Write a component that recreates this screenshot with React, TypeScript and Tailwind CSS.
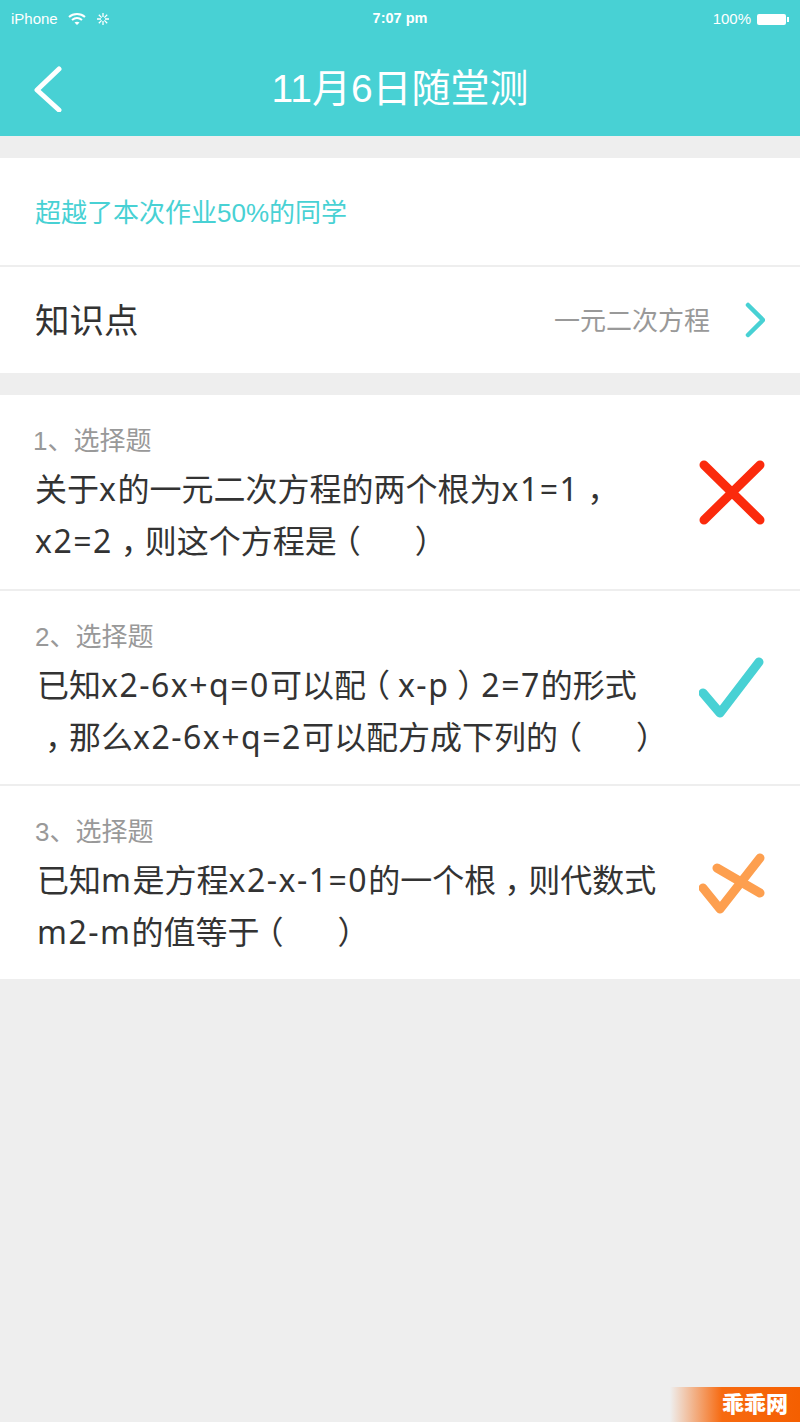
const questions = [
  {
    label: "1、选择题",
    labelClass: "pl-[33px]",
    bodyClass: "pl-[35px]",
    heightClass: "h-[196px] border-b-2 border-[#eeeeee]",
    lines: ["关于x的一元二次方程的两个根为x1=1，", "x2=2，则这个方程是（　）"],
    mark: "wrong",
  },
  {
    label: "2、选择题",
    labelClass: "pl-[35px]",
    bodyClass: "pl-[37px]",
    heightClass: "h-[195px] border-b-2 border-[#eeeeee]",
    lines: ["已知x2-6x+q=0可以配（x-p）2=7的形式", "，那么x2-6x+q=2可以配方成下列的（　）"],
    mark: "right",
  },
  {
    label: "3、选择题",
    labelClass: "pl-[35px]",
    bodyClass: "pl-[37px]",
    heightClass: "h-[193px]",
    lines: ["已知m是方程x2-x-1=0的一个根，则代数式", "m2-m的值等于（　）"],
    mark: "half",
  },
];

// punctuation is centred in its box, latin runs are spaced a little wider
const Line = ({ text }: { text: string }) => (
  <div>
    {text.split(/([，（）　]|[A-Za-z0-9=+-]+)/).map((part, i) => {
      if (part === "，" || part === "（" || part === "）") {
        return (
          <span key={i} className="inline-block w-[32px] text-center [font-feature-settings:'halt']">
            {part}
          </span>
        );
      }
      if (part === "　") return <span key={i} className="inline-block w-[38px]" />;
      if (/^[A-Za-z0-9=+-]+$/.test(part)) {
        return (
          <span key={i} className="tracking-[1.5px]">
            {part}
          </span>
        );
      }
      return <span key={i}>{part}</span>;
    })}
  </div>
);

const Mark = ({ type }: { type: string }) => {
  if (type === "wrong") {
    return (
      <svg width="66" height="66" viewBox="0 0 66 66" fill="none" stroke="#fb2a0c" strokeWidth="9" strokeLinecap="round">
        <path d="M5 6l56 55M61 6L5 61" />
      </svg>
    );
  }
  if (type === "right") {
    return (
      <svg width="66" height="66" viewBox="0 0 66 66" fill="none" stroke="#48d1d4" strokeWidth="9" strokeLinecap="round" strokeLinejoin="round">
        <path d="M4 38l17 20L60 7" />
      </svg>
    );
  }
  return (
    <svg width="66" height="66" viewBox="0 0 66 66" fill="none" stroke="#fd9f4f" strokeWidth="9" strokeLinecap="round" strokeLinejoin="round">
      <path d="M4 38l17 21L61 8" />
      <path d="M18 18l43 25" />
    </svg>
  );
};

const Question = ({ q }: { q: (typeof questions)[number] }) => (
  <div className={`relative bg-white ${q.heightClass}`}>
    <div className={`pt-[27px] text-[26px] leading-[38px] text-[#999999] ${q.labelClass}`}>{q.label}</div>
    <div className={`pt-[3px] font-['Noto_Sans','Noto_Sans_CJK_SC',sans-serif] text-[32px] leading-[52px] text-[#333333] whitespace-nowrap ${q.bodyClass}`}>
      {q.lines.map((line) => (
        <Line key={line} text={line} />
      ))}
    </div>
    <div className="absolute right-[35px] top-[64px]">
      <Mark type={q.mark} />
    </div>
  </div>
);

export default function App() {
  return (
    <div className="relative flex h-[1422px] w-[800px] flex-col overflow-hidden bg-[#eeeeee] font-['Liberation_Sans','Noto_Sans_CJK_SC',sans-serif]">
      <header className="h-[136px] bg-[#48d1d4] text-white">
        <div className="flex h-[38px] items-center justify-between px-[11px] text-[15px]">
          <div className="flex w-[200px] items-center gap-[10px]">
            <span>iPhone</span>
            <svg width="18" height="14" viewBox="0 0 18 14" fill="none" stroke="white" strokeWidth="2">
              <path d="M1 5c4.500-4 11.500-4 16 0M4 8c3-2.500 7-2.500 10 0" />
              <path d="M9 13l-2.500-2.500c1.500-1 3.500-1 5 0z" fill="white" stroke="none" />
            </svg>
            <svg width="14" height="14" viewBox="0 0 14 14" fill="none" stroke="white" strokeWidth="1.300">
              <path d="M7 1v4M7 9v4M1 7h4M9 7h4M2.800 2.800l2.800 2.800M8.400 8.400l2.800 2.800M11.200 2.800L8.400 5.600M5.600 8.400l-2.800 2.800" />
            </svg>
          </div>
          <span className="text-[14.500px] font-bold">7:07 pm</span>
          <div className="flex w-[200px] items-center justify-end gap-[6px]">
            <span>100%</span>
            <div className="h-[11px] w-[29px] rounded-[2px] bg-white" />
            <div className="-ml-[5px] h-[5px] w-[2px] bg-white" />
          </div>
        </div>
        <div className="relative flex h-[98px] items-center justify-center pt-[4px]">
          <svg className="absolute left-[33px] top-[28px]" width="30" height="46" viewBox="0 0 30 46" fill="none" stroke="white" strokeWidth="5" strokeLinecap="round" strokeLinejoin="round">
            <path d="M26 3L4 24l22 20" />
          </svg>
          <span className="text-[39px] leading-[50px]">11月6日随堂测</span>
        </div>
      </header>

      <section className="mt-[22px] bg-white">
        <div className="flex h-[109px] items-center border-b-2 border-[#eeeeee] pt-[4px] pl-[35px] text-[26px] text-[#48d1d4]">
          超越了本次作业50%的同学
        </div>
        <div className="flex h-[106px] items-center justify-between pl-[35px] pr-[35px]">
          <span className="pt-[4px] text-[34.500px] text-[#333333]">知识点</span>
          <div className="flex items-center gap-[35px]">
            <span className="pt-[2px] text-[26px] text-[#999999]">一元二次方程</span>
            <svg width="20" height="36" viewBox="0 0 20 36" fill="none" stroke="#48d1d4" strokeWidth="4.500" strokeLinecap="round" strokeLinejoin="round">
              <path d="M3 3l15 15L3 33" />
            </svg>
          </div>
        </div>
      </section>

      <section className="mt-[22px]">
        {questions.map((q) => (
          <Question key={q.label} q={q} />
        ))}
      </section>

      <div className="absolute bottom-0 right-0 flex h-[35px] w-[130px] items-center justify-end bg-gradient-to-r from-transparent via-[#f76a10] via-[40%] to-[#f55f00] pr-[12px]">
        <span className="text-[22px] font-black leading-none text-white">乖乖网</span>
      </div>
    </div>
  );
}
